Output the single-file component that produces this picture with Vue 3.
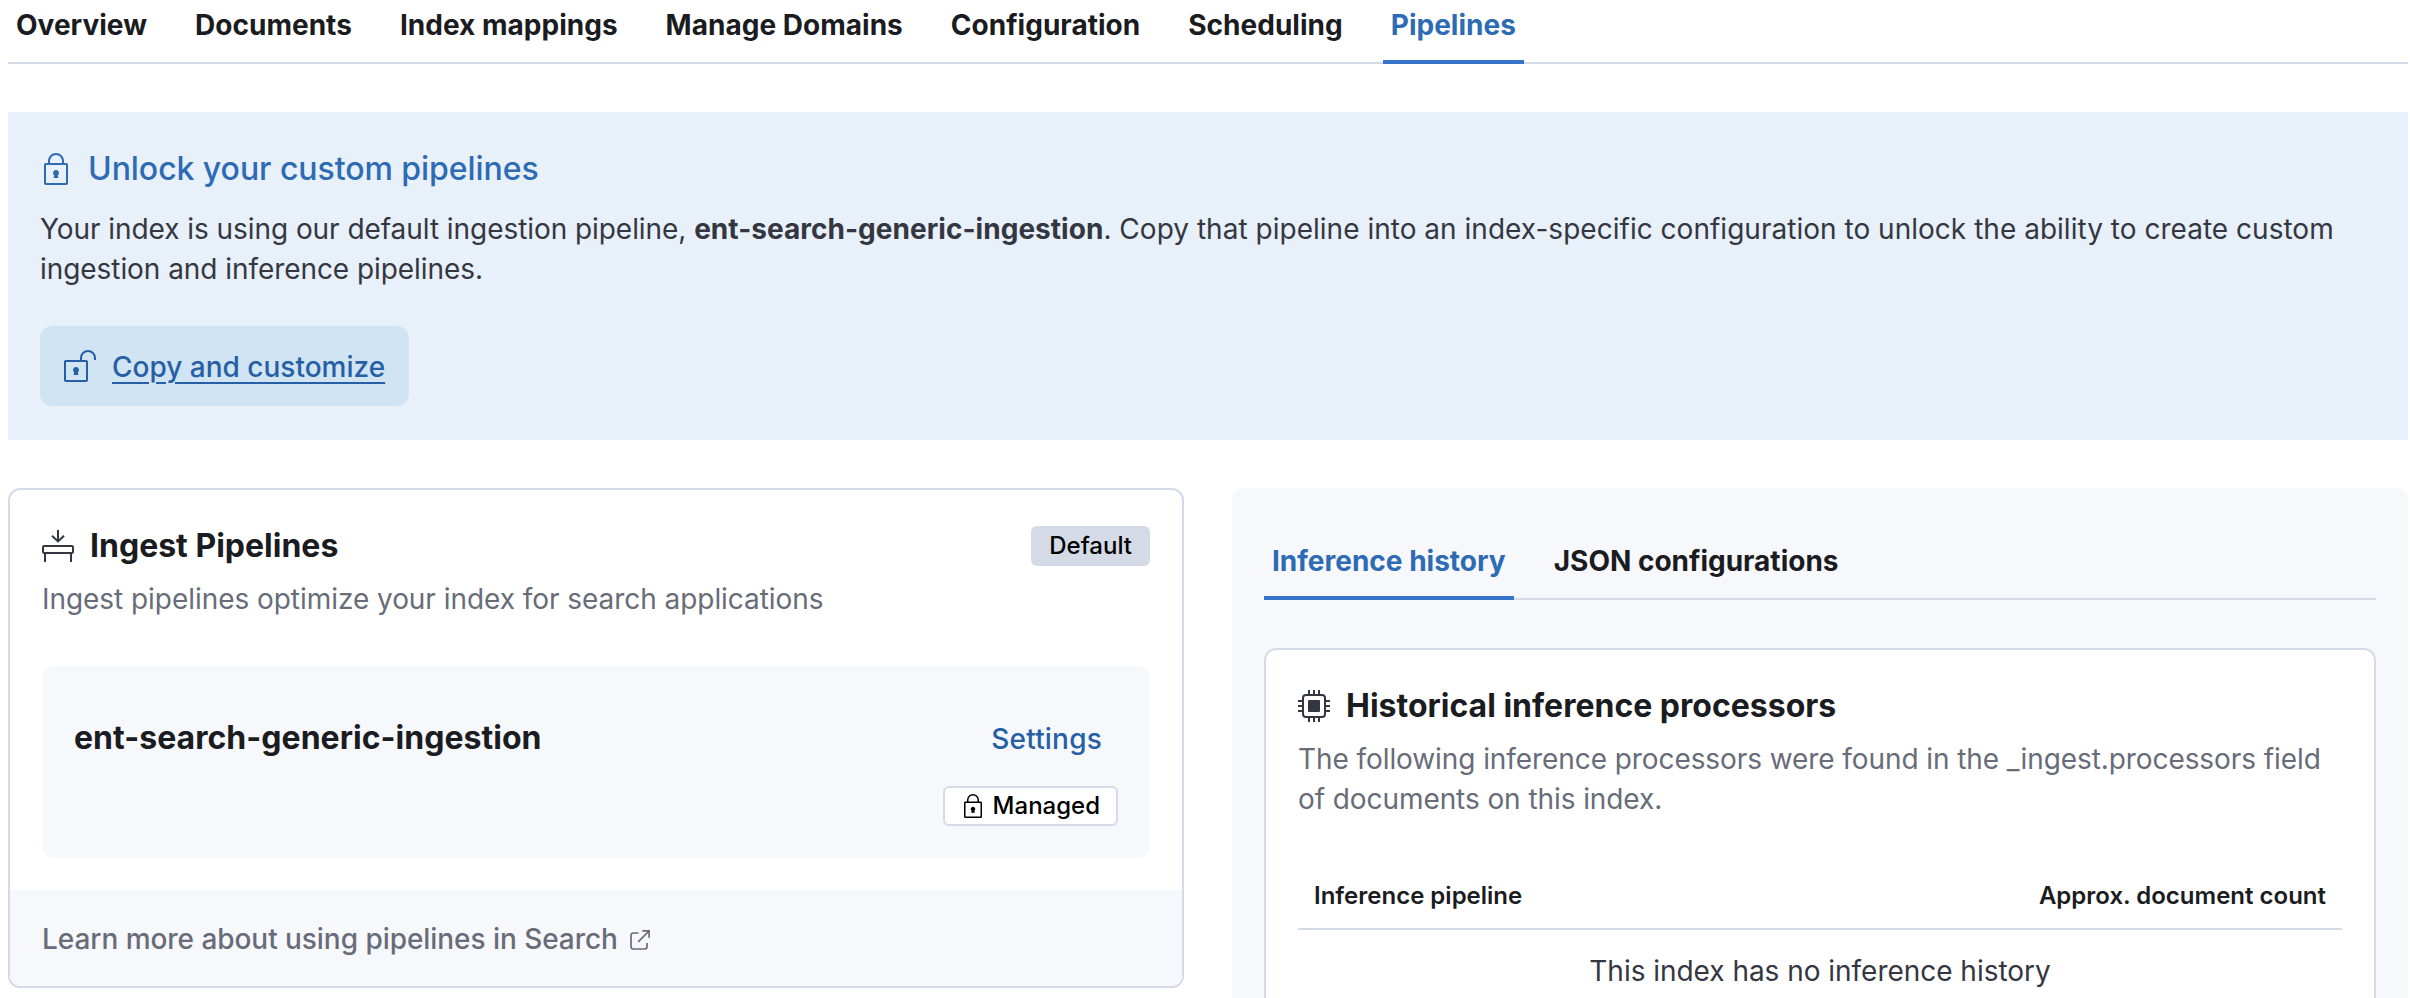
<script setup>
const tabs = ['Overview', 'Documents', 'Index mappings', 'Manage Domains', 'Configuration', 'Scheduling', 'Pipelines']
const sideTabs = ['Inference history', 'JSON configurations']
</script>

<template>
  <div class="page">
    <nav class="tabs">
      <a v-for="t in tabs" :key="t" class="tab" :class="{ active: t === 'Pipelines' }">{{ t }}</a>
    </nav>

    <section class="callout">
      <h2 class="callout-title">
        <svg class="icon" viewBox="0 0 16 16" fill="none" stroke="currentColor">
          <rect x="2.5" y="5.5" width="11" height="10" rx=".4" />
          <path d="M4.5 5.5V4a3.5 3.5 0 0 1 7 0v1.5" />
          <path d="M8 8.5a1.5 1.5 0 0 1 .9 2.7l.35 1.3h-2.5l.35-1.3A1.5 1.5 0 0 1 8 8.5z" fill="currentColor" stroke="none" />
        </svg>
        <span>Unlock your custom pipelines</span>
      </h2>
      <p class="callout-body">
        <span class="lead">Your index is using our default ingestion pipeline, </span><strong>ent-search-generic-ingestion</strong><span class="rest">. Copy that pipeline into an index-specific configuration to unlock the ability to create custom </span><span class="lead">ingestion and inference pipelines.</span>
      </p>
      <button class="copy">
        <svg class="icon" viewBox="0 0 16 16" fill="none" stroke="currentColor">
          <rect x=".5" y="5.5" width="11" height="10" rx=".4" />
          <path d="M8.5 5.5V4a3.5 3.5 0 0 1 7 0v1" />
          <path d="M6 8.5a1.5 1.5 0 0 1 .9 2.7l.35 1.3h-2.5l.35-1.3A1.5 1.5 0 0 1 6 8.5z" fill="currentColor" stroke="none" />
        </svg>
        <span class="copy-label">Copy and customize</span>
      </button>
    </section>

    <div class="columns">
      <section class="card">
        <div class="card-main">
          <header class="card-head">
            <h3 class="heading">
              <svg class="icon" viewBox="0 0 16 16" fill="none" stroke="currentColor">
                <path d="M8 0v6M5 2.9l3 2.8 3-2.8" />
                <rect x=".5" y="8" width="15" height="3.5" rx=".6" />
                <path d="M1.5 11.5V16M14.5 11.5V16" />
              </svg>
              <span>Ingest Pipelines</span>
            </h3>
            <span class="badge">Default</span>
          </header>
          <p class="subdued">Ingest pipelines optimize your index for search applications</p>
          <div class="pipeline">
            <div class="pipeline-row">
              <h4 class="pipeline-name">ent-search-generic-ingestion</h4>
              <a class="settings">Settings</a>
            </div>
            <span class="badge hollow">
              <svg class="icon-s" viewBox="0 0 16 16" fill="none" stroke="currentColor">
                <rect x="2.5" y="5.5" width="11" height="10" rx=".4" />
                <path d="M4.5 5.5V4a3.5 3.5 0 0 1 7 0v1.5" />
                <path d="M8 8.5a1.5 1.5 0 0 1 .9 2.7l.35 1.3h-2.5l.35-1.3A1.5 1.5 0 0 1 8 8.5z" fill="currentColor" stroke="none" />
              </svg>
              <span>Managed</span>
            </span>
          </div>
        </div>
        <footer class="card-foot">
          <span>Learn more about using pipelines in Search</span>
          <svg class="icon-ext" viewBox="0 0 24 24" fill="none" stroke="currentColor" stroke-width="1.7">
            <path d="M10.5 5H5.2A2.200 2.200 0 0 0 3 7.200V18.800A2.200 2.200 0 0 0 5.200 21H16.800A2.200 2.200 0 0 0 19 18.800V15" />
            <path d="M10.200 13.800 21 3M14.300 2.900H21.100V9.700" />
          </svg>
        </footer>
      </section>

      <section class="side">
        <nav class="tabs side-tabs">
          <a v-for="(t, i) in sideTabs" :key="t" class="tab" :class="{ active: i === 0 }">{{ t }}</a>
        </nav>
        <div class="card history">
          <h3 class="heading">
            <svg class="icon" viewBox="0 0 16 16" fill="none" stroke="currentColor">
              <rect x="2.500" y="2.500" width="11" height="11" rx="1.500" />
              <rect x="5" y="5" width="6" height="6" rx=".5" fill="currentColor" stroke="none" />
              <path d="M5.500 0v2M8 0v2M10.500 0v2M5.500 14v2M8 14v2M10.500 14v2M0 5.500h2M0 8h2M0 10.500h2M14 5.500h2M14 8h2M14 10.500h2" />
            </svg>
            <span>Historical inference processors</span>
          </h3>
          <p class="subdued tight">The following inference processors were found in the _ingest.processors field of documents on this index.</p>
          <table class="table">
            <thead>
              <tr><th>Inference pipeline</th><th class="num">Approx. document count</th></tr>
            </thead>
            <tbody>
              <tr><td colspan="2">This index has no inference history</td></tr>
            </tbody>
          </table>
        </div>
      </section>
    </div>
  </div>
</template>

<style>
body { background: #fff; overflow: hidden; }
</style>

<style scoped>
.page {
  box-sizing: border-box;
  width: 2410px;
  height: 998px;
  overflow: hidden;
  padding: 0 2px 0 8px;
  font-family: Inter, "Liberation Sans", sans-serif;
  font-size: 28px;
  line-height: 40px;
  color: #343741;
}
h2, h3, h4, p { margin: 0; }
.tabs {
  display: flex;
  gap: 32px;
  height: 64px;
  box-shadow: inset 0 -2px 0 #d4dae7;
}
.tab {
  padding: 0 8px;
  line-height: 50px;
  font-weight: 700;
  letter-spacing: .02px;
  color: #1a1c21;
  white-space: nowrap;
}
.tab.active { color: #2d6bb5; box-shadow: inset 0 -4px 0 #3674cb; }
.icon { width: 32px; height: 32px; flex: none; }
.callout {
  box-sizing: border-box;
  height: 328px;
  margin-top: 48px;
  padding: 33px 32px 32px;
  background: #e8f0fa;
}
.callout-title {
  display: flex;
  align-items: center;
  gap: 16px;
  font-size: 32px;
  line-height: 48px;
  font-weight: 500;
  letter-spacing: -.05px;
  color: #2d6bb5;
}
.callout-body { margin-top: 16px; }
.callout-body strong { font-weight: 700; letter-spacing: .03px; }
.lead { letter-spacing: -.06px; }
.rest { letter-spacing: .02px; }
.copy {
  display: flex;
  align-items: center;
  gap: 16px;
  height: 80px;
  margin-top: 37px;
  padding: 0 24px;
  border: 0;
  border-radius: 12px;
  background: #d1e4f3;
  color: #265fa5;
  font: inherit;
  font-weight: 500;
}
.copy-label { margin-top: 2px; text-decoration: underline; text-decoration-thickness: 2px; text-underline-offset: 5px; }
.columns {
  display: grid;
  grid-template-columns: 1fr 1fr;
  gap: 48px;
  margin-top: 48px;
  align-items: start;
}
.card {
  box-sizing: border-box;
  border: 2px solid #d4dae7;
  border-radius: 12px;
  background: #fff;
  overflow: hidden;
}
.card-main { height: 400px; box-sizing: border-box; padding: 32px; }
.card-head { display: flex; justify-content: space-between; align-items: center; }
.heading {
  display: flex;
  align-items: center;
  gap: 16px;
  font-size: 32px;
  line-height: 48px;
  font-weight: 700;
  color: #1a1c21;
}
.heading .icon { color: #343741; }
.subdued { margin-top: 9px; color: #686c79; letter-spacing: -.05px; }
.subdued.tight { letter-spacing: -.08px; }
.badge {
  box-sizing: border-box;
  display: flex;
  align-items: center;
  height: 40px;
  padding: 0 18px;
  border-radius: 6px;
  background: #d4dae6;
  color: #000;
  font-size: 24px;
  font-weight: 500;
}
.badge.hollow { padding: 0 16px; gap: 8px; border: 2px solid #d4dae7; background: #fff; align-self: flex-end; margin-top: 16px; }
.icon-s { width: 24px; height: 24px; }
.pipeline {
  box-sizing: border-box;
  display: flex;
  flex-direction: column;
  height: 192px;
  margin-top: 47px;
  padding: 32px;
  border-radius: 12px;
  background: #f7f8fc;
}
.pipeline-row { display: flex; justify-content: space-between; align-items: center; height: 72px; }
.pipeline-name { padding-top: 8px; font-size: 32px; font-weight: 700; line-height: 48px; letter-spacing: .03px; color: #1a1c21; }
.settings { padding: 9px 16px 0 0; font-weight: 500; letter-spacing: .2px; color: #265fa5; }
.card-foot {
  display: flex;
  align-items: center;
  gap: 10px;
  box-sizing: border-box;
  height: 96px;
  padding: 2px 32px 0;
  background: #f7f8fc;
  color: #686c79;
  font-weight: 500;
  letter-spacing: -.05px;
}
.icon-ext { width: 24px; height: 24px; margin-top: 2px; }
.side {
  padding: 32px;
  border-radius: 12px;
  background: #f7f8fc;
}
.side-tabs { height: 80px; }
.side-tabs .tab { line-height: 82px; letter-spacing: 0; }
.history { margin-top: 48px; padding: 32px; }
.table { width: 100%; margin-top: 43px; border-collapse: separate; border-spacing: 0; }
.table th {
  height: 68px;
  padding: 1px 16px 0;
  box-sizing: border-box;
  border-bottom: 2px solid #d4dae7;
  font-size: 24px;
  font-weight: 600;
  text-align: left;
  color: #1a1c21;
}
.table th.num { text-align: right; }
.table td { height: 80px; box-sizing: border-box; padding: 2px 16px 0; text-align: center; letter-spacing: -.03px; }
</style>
